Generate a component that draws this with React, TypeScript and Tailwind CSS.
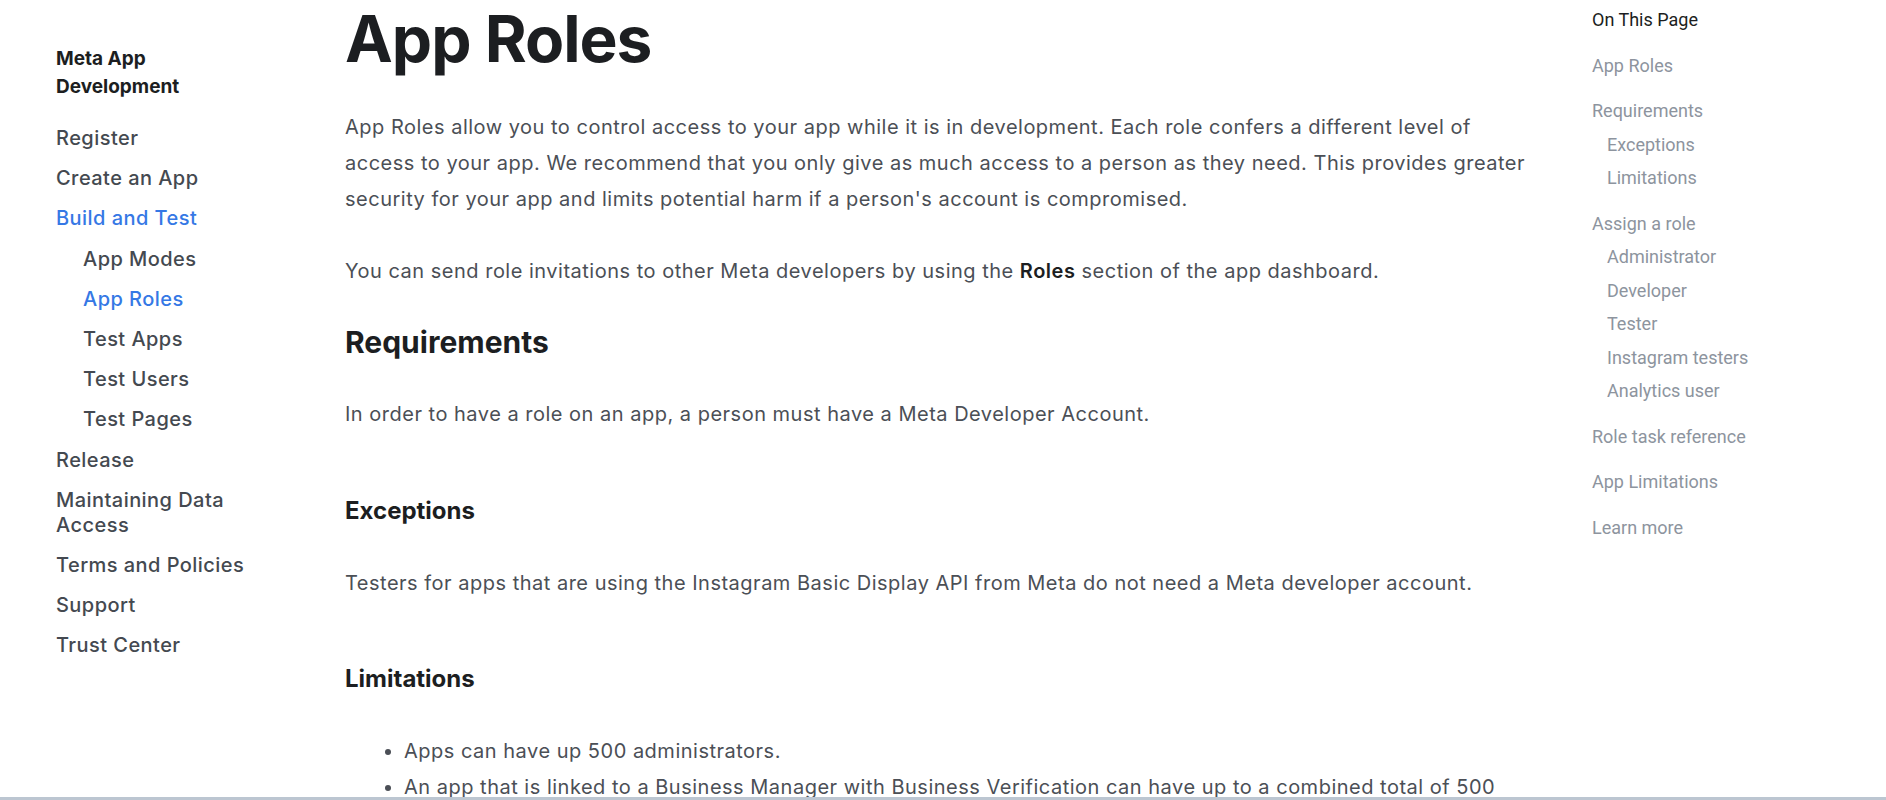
import React from 'react';

type NavItem = { label: string; sub?: boolean; active?: boolean };

const navItems: NavItem[] = [
  { label: 'Register' },
  { label: 'Create an App' },
  { label: 'Build and Test', active: true },
  { label: 'App Modes', sub: true },
  { label: 'App Roles', sub: true, active: true },
  { label: 'Test Apps', sub: true },
  { label: 'Test Users', sub: true },
  { label: 'Test Pages', sub: true },
  { label: 'Release' },
  { label: 'Maintaining Data Access' },
  { label: 'Terms and Policies' },
  { label: 'Support' },
  { label: 'Trust Center' },
];

const tocGroups: { title: string; children?: string[] }[] = [
  { title: 'App Roles' },
  { title: 'Requirements', children: ['Exceptions', 'Limitations'] },
  {
    title: 'Assign a role',
    children: ['Administrator', 'Developer', 'Tester', 'Instagram testers', 'Analytics user'],
  },
  { title: 'Role task reference' },
  { title: 'App Limitations' },
  { title: 'Learn more' },
];

const SideNav = () => (
  <nav className="w-[345px] shrink-0 pl-[56px] pt-[45px] font-['Inter',sans-serif]">
    <div className="w-[205px]">
      <h2 className="text-[19px] leading-[27.5px] font-bold text-[#1c1e21]">Meta App Development</h2>
      <ul className="mt-[26px]">
        {navItems.map((item) => (
          <li
            key={item.label}
            className={`mb-[15.2px] text-[20px] leading-[25px] font-medium tracking-[0.45px] ${
              item.sub ? 'pl-[27px]' : ''
            } ${item.active ? 'text-[#3578e5]' : 'text-[#444950]'}`}
          >
            {item.label}
          </li>
        ))}
      </ul>
    </div>
  </nav>
);

const Toc = () => (
  <aside className="ml-[55px] pt-[3px] font-['Roboto',sans-serif] text-[18px] leading-[33.5px]">
    <div className="text-[#1c1e21]">On This Page</div>
    {tocGroups.map((group) => (
      <div key={group.title} className="mt-[12px]">
        <div className="text-[#8d949e]">{group.title}</div>
        {group.children?.map((c) => (
          <div key={c} className="pl-[15px] text-[#8d949e]">
            {c}
          </div>
        ))}
      </div>
    ))}
  </aside>
);

const Content = () => (
  <main className="w-[1192px] shrink-0 font-['Inter',sans-serif] text-[#4b4f56]">
    <h1 className="text-[64px] leading-[77px] font-bold tracking-[-1px] text-[#1c1e21]">App Roles</h1>
    <div className="tracking-[0.5px]">
      <p className="mt-[32px] text-[20px] leading-[36px]">
        App Roles allow you to control access to your app while it is in development. Each role confers a different
        level of access to your app. We recommend that you only give as much access to a person as they need. This
        provides greater security for your app and limits potential harm if a person's account is compromised.
      </p>
      <p className="mt-[36px] text-[20px] leading-[36px]">
        You can send role invitations to other Meta developers by using the{' '}
        <span className="font-semibold text-[#1c1e21]">Roles</span> section of the app dashboard.
      </p>
    </div>

    <h2 className="mt-[35px] text-[30px] leading-[36px] font-bold text-[#1c1e21]">Requirements</h2>
    <p className="mt-[36px] text-[20px] leading-[36px] tracking-[0.5px]">
      In order to have a role on an app, a person must have a Meta Developer Account.
    </p>

    <h3 className="mt-[65px] text-[24px] leading-[28px] font-bold text-[#1c1e21]">Exceptions</h3>
    <p className="mt-[40px] text-[20px] leading-[36px] tracking-[0.5px]">
      Testers for apps that are using the Instagram Basic Display API from Meta do not need a Meta developer account.
    </p>

    <h3 className="mt-[64px] text-[24px] leading-[28px] font-bold text-[#1c1e21]">Limitations</h3>
    <ul className="mt-[40px] list-disc pl-[59px] text-[20px] leading-[36px] tracking-[0.5px]">
      <li>Apps can have up 500 administrators.</li>
      <li>
        An app that is linked to a Business Manager with Business Verification can have up to a combined total of 500
        developers, testers, and analytics users.
      </li>
    </ul>
  </main>
);

export default function App() {
  return (
    <div className="flex h-[800px] w-[1886px] flex-col overflow-hidden bg-white">
      <div className="flex h-[797px] overflow-hidden">
        <SideNav />
        <Content />
        <Toc />
      </div>
      <div className="h-[3px] bg-[#bcc6d1]" />
    </div>
  );
}
